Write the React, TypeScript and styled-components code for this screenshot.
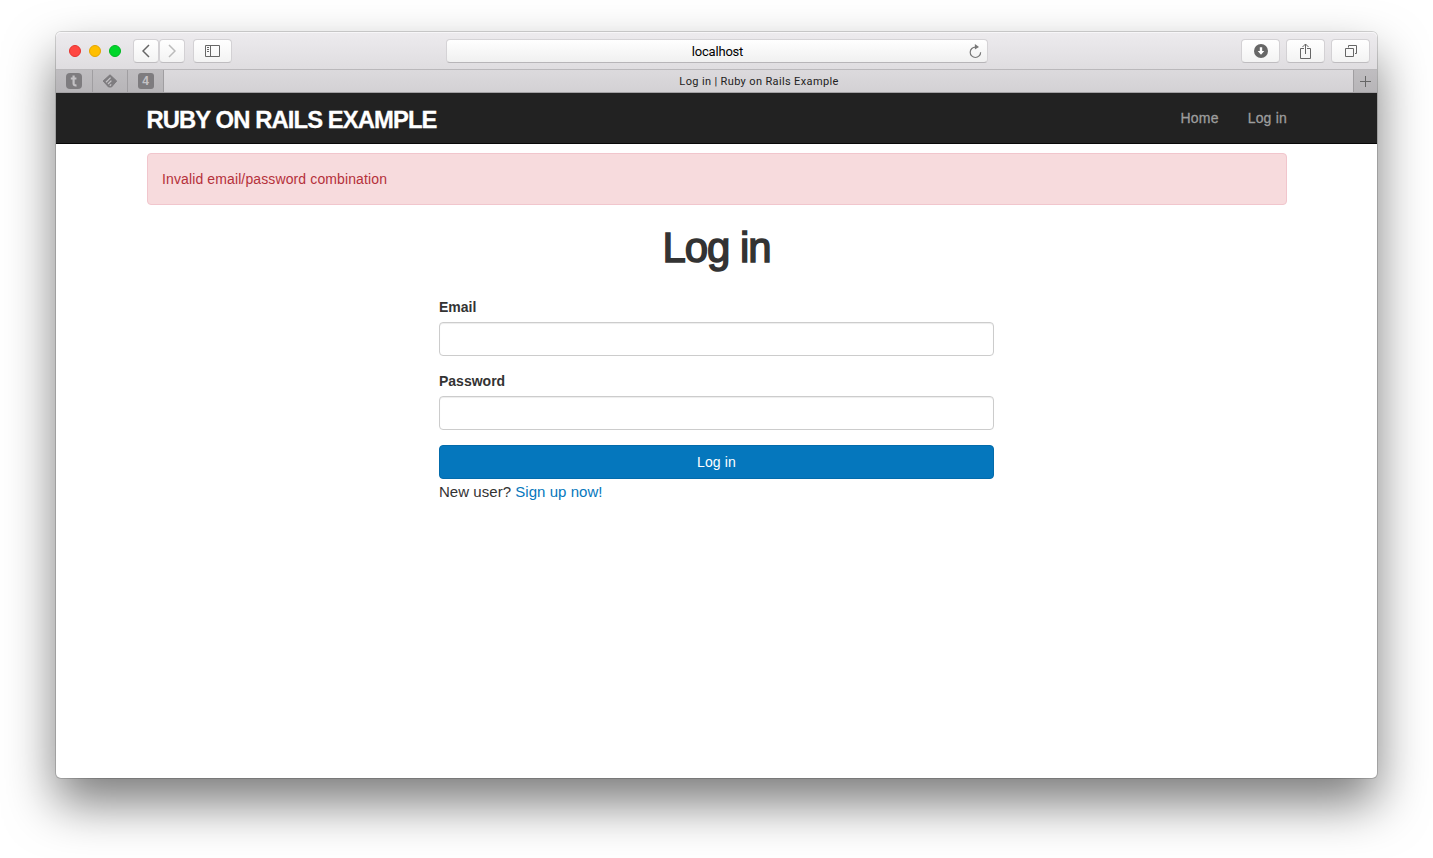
import React from "react";
import styled, { createGlobalStyle } from "styled-components";

const GlobalStyle = createGlobalStyle`
  * { box-sizing: border-box; }
  html, body { margin: 0; background: #fff; }
  body { overflow: hidden; }
`;

const Desktop = styled.div`
  width: 1433px;
  height: 858px;
  padding: 32px 56px 80px;
  overflow: hidden;
  background: #fff;
`;

const BrowserWindow = styled.div`
  display: flex;
  flex-direction: column;
  height: 746px;
  border-radius: 5px;
  background: #fff;
  box-shadow: 0 0 0 1px rgba(0, 0, 0, 0.16), 0 25px 50px rgba(0, 0, 0, 0.52);
`;

const Toolbar = styled.div`
  display: flex;
  align-items: flex-start;
  height: 38px;
  padding: 7px 7px 0 13px;
  border-radius: 5px 5px 0 0;
  background: linear-gradient(#edebee, #dfdde0);
  border-bottom: 1px solid #bab8bb;
  box-shadow: inset 0 1px 0 #f7f6f8;
`;

const Lights = styled.div`
  display: flex;
  gap: 8px;
  padding-top: 6px;
  margin-right: 12px;
`;

const Light = styled.span<{ $fill: string; $edge: string }>`
  width: 12px;
  height: 12px;
  border-radius: 50%;
  background: ${(p) => p.$fill};
  border: 1px solid ${(p) => p.$edge};
`;

const ToolButton = styled.button<{ $width: number; $gap?: number }>`
  display: flex;
  align-items: center;
  justify-content: center;
  width: ${(p) => p.$width}px;
  height: 24px;
  margin: 0 0 0 ${(p) => p.$gap || 0}px;
  padding: 0;
  border: 1px solid #d3d1d4;
  border-bottom-color: #bfbdc0;
  border-radius: 4px;
  background: linear-gradient(#fff, #f3f3f3);
`;

const AddressBar = styled.div`
  display: grid;
  grid-template-columns: 24px 1fr 24px;
  align-items: center;
  justify-items: center;
  width: 542px;
  height: 24px;
  margin-left: 214px;
  margin-right: auto;
  border: 1px solid #d5d3d6;
  border-bottom-color: #b7b5b8;
  border-radius: 4px;
  background: linear-gradient(#fff, #f0f0f0);
`;

const Address = styled.span`
  grid-column: 2;
  font: 13px/22px Roboto, sans-serif;
  letter-spacing: -0.2px;
  padding: 1px 0 0 1px;
  color: #000;
`;

const TabBar = styled.div`
  display: flex;
  height: 23px;
  border-bottom: 1px solid #a3a1a4;
  background: linear-gradient(#dcdadd, #d3d1d4);
`;

const PinnedTab = styled.div<{ $width: number }>`
  display: flex;
  align-items: center;
  justify-content: center;
  width: ${(p) => p.$width}px;
  background: linear-gradient(#bfbdc0, #b7b5b8);
  border-right: 1px solid #a09ea1;
`;

const Badge = styled.span`
  width: 16px;
  height: 16px;
  border-radius: 3px;
  background: #7e7c7f;
  color: #c4c2c5;
  text-align: center;
  font: bold 12px/16px "Liberation Sans", sans-serif;
`;

const ActiveTab = styled.div`
  flex: 1;
  padding-left: 1px;
  text-align: center;
  font: 11px/23px Roboto, sans-serif;
  letter-spacing: 0.36px;
  color: #222;
`;

const NewTab = styled.div`
  display: flex;
  align-items: center;
  justify-content: center;
  width: 24px;
  border-left: 1px solid #a09ea1;
  background: linear-gradient(#bfbdc0, #b7b5b8);
`;

const Page = styled.div`
  flex: 1;
  font: 14px/20px "Liberation Sans", Arial, sans-serif;
  color: #333;
`;

const Navbar = styled.header`
  display: flex;
  justify-content: space-between;
  height: 51px;
  padding: 0 90px 0 91px;
  background: #222;
  border-bottom: 1px solid #080808;
`;

const Brand = styled.a`
  margin-left: -0.5px;
  font-size: 23.8px;
  line-height: 53px;
  font-weight: bold;
  letter-spacing: -0.9px;
  color: #fff;
  -webkit-text-stroke: 0.3px #fff;
`;

const NavLinks = styled.nav`
  display: flex;
  gap: 29px;
`;

const NavLink = styled.a`
  line-height: 50px;
  letter-spacing: 0.2px;
  color: #9d9d9d;
  -webkit-text-stroke: 0.3px #9d9d9d;
`;

const Alert = styled.div`
  height: 52px;
  margin: 9px 90px 0 91px;
  padding: 15px 14px;
  border: 1px solid #f1c6cd;
  border-radius: 4px;
  background: #f7dbdd;
  color: #b5303a;
  letter-spacing: 0.12px;
`;

const Title = styled.h1`
  margin: 20px 0 0;
  text-align: center;
  font-size: 42px;
  line-height: 46px;
  font-weight: 400;
  letter-spacing: -1.1px;
  -webkit-text-stroke: 1.5px #333;
`;

const Form = styled.form`
  display: flex;
  flex-direction: column;
  width: 555px;
  margin: 26px 0 0 383px;
`;

const Label = styled.label`
  margin-bottom: 5px;
  font-weight: bold;
`;

const Input = styled.input`
  height: 34px;
  margin: 0 0 15px;
  padding: 6px 12px;
  border: 1px solid #ccc;
  border-radius: 4px;
  outline: none;
  background: #fff;
  box-shadow: inset 0 1px 1px rgba(0, 0, 0, 0.075);
`;

const Submit = styled.button`
  height: 34px;
  padding: 0;
  border: 1px solid #036bab;
  border-radius: 4px;
  background: #0577bd;
  color: #fff;
  font: 14px/20px "Liberation Sans", Arial, sans-serif;
  letter-spacing: 0.15px;
`;

const Note = styled.p`
  margin: 3px 0 0;
  font-size: 15px;
  letter-spacing: 0.04px;
`;

const SignUp = styled.a`
  color: #0577bd;
`;

const Chevron = ({ flip, color }: { flip?: boolean; color: string }) => (
  <svg width="8" height="14" viewBox="0 0 8 14" fill="none" stroke={color} strokeWidth="1.5">
    <path d={flip ? "M1 1l6 6-6 6" : "M7 1L1 7l6 6"} />
  </svg>
);

export default function App() {
  return (
    <Desktop>
      <GlobalStyle />
      <BrowserWindow>
        <Toolbar>
          <Lights>
            <Light $fill="#ff4742" $edge="#e6322e" />
            <Light $fill="#ffbf00" $edge="#e4a500" />
            <Light $fill="#00d62b" $edge="#00b722" />
          </Lights>
          <ToolButton $width={26} aria-label="Back"><Chevron color="#666" /></ToolButton>
          <ToolButton $width={26} aria-label="Forward"><Chevron flip color="#bbb" /></ToolButton>
          <ToolButton $width={39} $gap={8} aria-label="Sidebar">
            <svg width="15" height="12" viewBox="0 0 15 12" fill="none" stroke="#666">
              <path d="M.5.5h14v11H.5zM5.5.5v11M2 2.5h2M2 4.5h2M2 6.5h2" />
            </svg>
          </ToolButton>
          <AddressBar>
            <Address>localhost</Address>
            <svg width="14" height="16" viewBox="0 0 14 16" fill="none" stroke="#777" strokeWidth="1.2">
              <path d="M7.6 3.1A5.2 5.2 0 1 0 12.6 8.2" />
              <path d="M6.9 0v5.6L11 3z" fill="#777" stroke="none" />
            </svg>
          </AddressBar>
          <ToolButton $width={39} aria-label="Downloads">
            <svg width="14" height="14" viewBox="0 0 14 14">
              <circle cx="7" cy="7" r="7" fill="#666" />
              <path d="M5.8 3.2h2.4V7h2.1L7 10.7 3.7 7h2.1z" fill="#fff" />
            </svg>
          </ToolButton>
          <ToolButton $width={39} $gap={6} aria-label="Share">
            <svg width="11" height="17" viewBox="0 0 11 17" fill="none" stroke="#666">
              <path d="M4 5.5H.5v10h10v-10H7M5.5 11V1M2.5 4l3-3 3 3" />
            </svg>
          </ToolButton>
          <ToolButton $width={39} $gap={6} aria-label="Show tabs">
            <svg width="13" height="12" viewBox="-1 0 13 12" fill="none" stroke="#666">
              <path d="M.5 3.5h8v8h-8zM3.5 2.5v-2h8v8H10" />
            </svg>
          </ToolButton>
        </Toolbar>
        <TabBar>
          <PinnedTab $width={37}>
            <svg width="16" height="16" viewBox="0 0 16 16">
              <rect width="16" height="16" rx="4" fill="#7e7c7f" />
              <path d="M7.6 2.5v3h2.8M4.8 5.5h2.8v5.1q0 2.2 2.9 1.7" fill="none" stroke="#c4c2c5" strokeWidth="2.2" />
            </svg>
          </PinnedTab>
          <PinnedTab $width={35}>
            <svg width="16" height="14" viewBox="0 0 16 14">
              <path d="M8 .8 14.7 7 9.5 13H6.5L1.1 7z" fill="#7e7c7f" stroke="#7e7c7f" strokeLinejoin="round" />
              <path d="M4 8.2 8.6 3.6M6 10l3.4-3.4M7.8 11.8l1.4-1.4" fill="none" stroke="#c4c2c5" strokeWidth="1.3" />
            </svg>
          </PinnedTab>
          <PinnedTab $width={36}><Badge>4</Badge></PinnedTab>
          <ActiveTab>Log in | Ruby on Rails Example</ActiveTab>
          <NewTab>
            <svg width="11" height="11" viewBox="0 0 11 11" stroke="#666"><path d="M5.5 0v11M0 5.5h11" /></svg>
          </NewTab>
        </TabBar>
        <Page>
          <Navbar>
            <Brand>RUBY ON RAILS EXAMPLE</Brand>
            <NavLinks><NavLink>Home</NavLink><NavLink>Log in</NavLink></NavLinks>
          </Navbar>
          <Alert>Invalid email/password combination</Alert>
          <Title>Log in</Title>
          <Form>
            <Label htmlFor="email">Email</Label>
            <Input id="email" type="email" />
            <Label htmlFor="password">Password</Label>
            <Input id="password" type="password" />
            <Submit type="button">Log in</Submit>
            <Note>New user? <SignUp>Sign up now!</SignUp></Note>
          </Form>
        </Page>
      </BrowserWindow>
    </Desktop>
  );
}
